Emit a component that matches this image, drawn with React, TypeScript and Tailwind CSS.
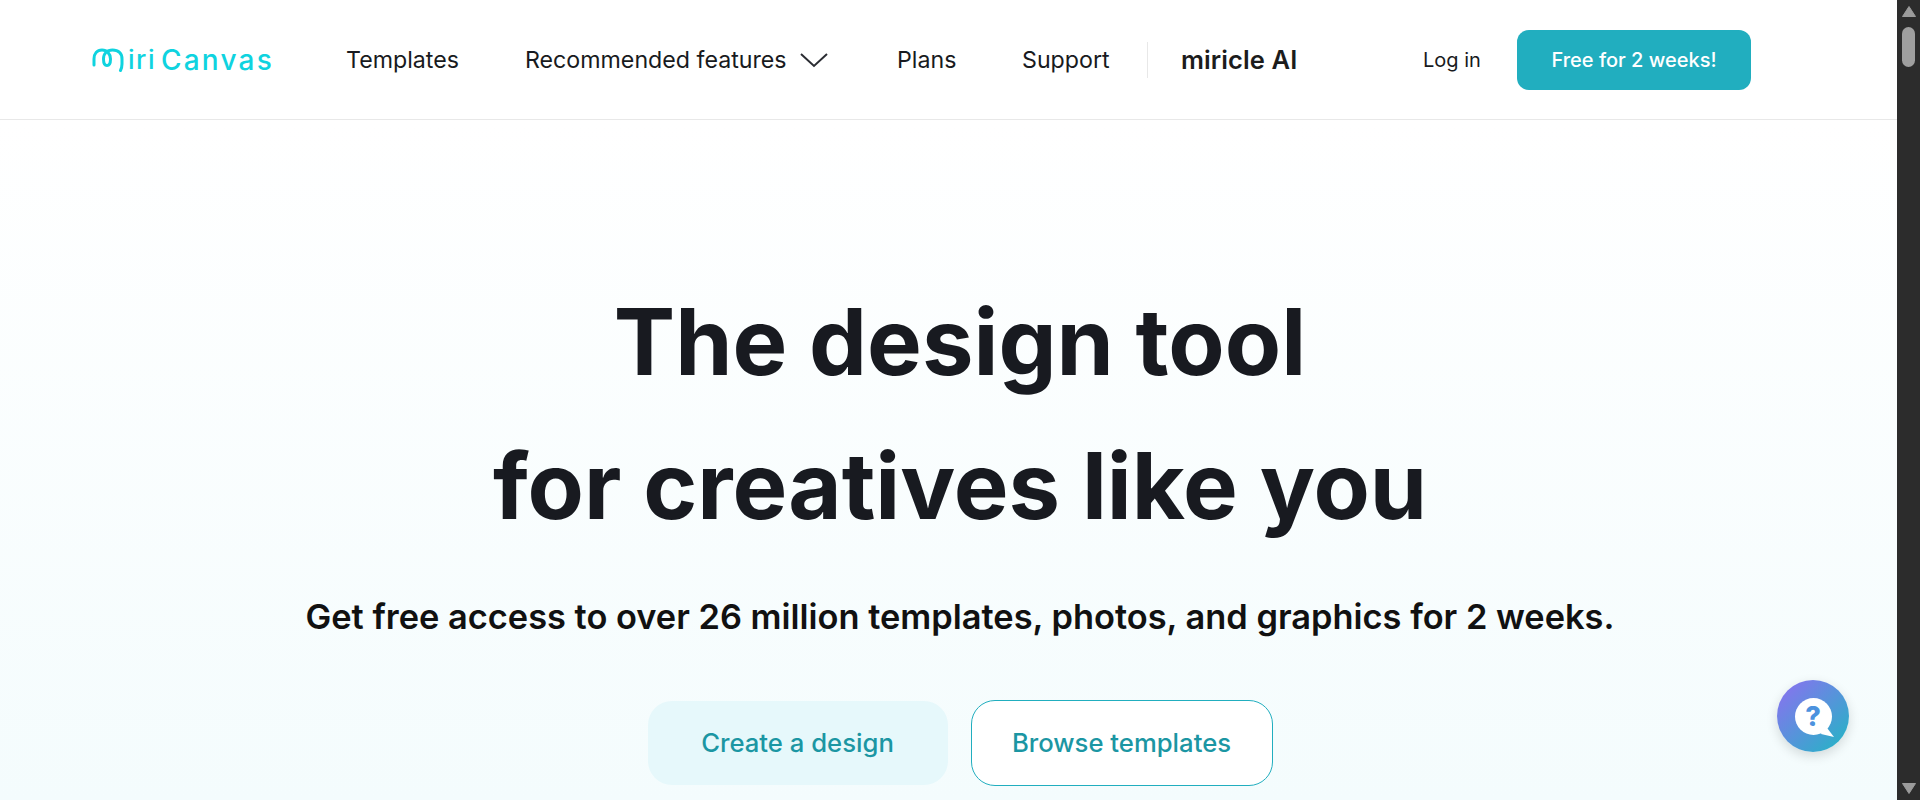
function MiriMark() {
  return (
    <svg width="33" height="24" viewBox="0 0 33 24" fill="none" className="shrink-0">
      <path
        d="M2 17V11C2 5.5 5 2 10 2C15 2 18.5 6 18.5 11C18.5 15 17 17.5 15 17.5C13 17.5 11.5 15 11.5 11C11.5 5.5 15 2 20.5 2C26.5 2 30 5.5 30 11V16C30 18.5 29.5 20.5 28.5 22.5"
        stroke="#0fd3df"
        strokeWidth="3"
        strokeLinecap="round"
      />
    </svg>
  );
}

function Scrollbar() {
  return (
    <div className="absolute inset-y-0 right-0 flex w-[23px] flex-col items-center justify-between bg-[#2c2c2c] py-[6px]">
      <div className="flex flex-col items-center gap-[10px]">
        <svg width="14" height="11" viewBox="0 0 14 11">
          <path d="M7 0.5L13.5 10.5H0.5Z" fill="#9b9b9b" stroke="#9b9b9b" strokeLinejoin="round" />
        </svg>
        <div className="h-[40px] w-[13px] rounded-full bg-[#9f9f9f]" />
      </div>
      <svg width="14" height="11" viewBox="0 0 14 11">
        <path d="M0.5 0.5H13.5L7 10.5Z" fill="#9b9b9b" stroke="#9b9b9b" strokeLinejoin="round" />
      </svg>
    </div>
  );
}

function ChatButton() {
  return (
    <div className="absolute left-[1777px] top-[680px] flex h-[72px] w-[72px] items-center justify-center rounded-full bg-[linear-gradient(135deg,#8f6ef2,#1fb8c3)] shadow-[0_4px_12px_rgba(0,0,0,0.14)]">
      <div className="relative flex h-[37px] w-[37px] items-center justify-center rounded-full bg-white">
        <span className="text-[27px] font-extrabold leading-none text-[#4c92de]">?</span>
        <svg width="13" height="13" viewBox="0 0 13 13" className="absolute bottom-[-2px] right-[-2px]">
          <path d="M3 0L13 13L0 10Z" fill="#fff" />
        </svg>
      </div>
    </div>
  );
}

export default function App() {
  return (
    <div className="relative h-[800px] w-[1920px] overflow-hidden bg-white font-['Inter',sans-serif] text-[#181a20]">
      <header className="flex h-[120px] items-center border-b border-[#e8e8e8] pl-[92px] text-[23.2px]">
        <div className="flex w-[254px] items-center text-[#0fd3df]">
          <MiriMark />
          <span className="ml-[3px] text-[26px] font-medium leading-none tracking-[1.5px]">iri</span>
          <span className="ml-[5px] text-[28px] font-medium leading-none tracking-[2.2px]">Canvas</span>
        </div>
        <nav className="flex items-center pt-[1px]">
          <a className="w-[179px]">Templates</a>
          <a className="flex w-[372px] items-center">
            Recommended features
            <svg width="30" height="18" viewBox="0 0 30 18" fill="none" className="ml-[12px]">
              <path d="M2 3L15 15L28 3" stroke="#2b2d33" strokeWidth="2" />
            </svg>
          </a>
          <a className="w-[125px]">Plans</a>
          <a className="w-[125px]">Support</a>
          <div className="h-[36px] w-px bg-[#e8e8e8]" />
          <span className="ml-[33px] w-[242px] text-[25.5px] font-semibold tracking-[0.1px] text-[#1c1c1c]">miricle AI</span>
        </nav>
        <a className="w-[94px] text-[20px]">Log in</a>
        <button className="h-[60px] w-[234px] rounded-[12px] bg-[#21aebf] text-[20px] font-medium text-white">
          Free for 2 weeks!
        </button>
      </header>

      <main className="flex h-[680px] flex-col items-center bg-[linear-gradient(180deg,#ffffff,#f4fcfd)] pt-[150px]">
        <h1 className="text-center text-[92px] font-bold leading-[144px]">
          The design tool
          <br />
          for creatives like you
        </h1>
        <p className="mt-[32px] text-[34.4px] font-semibold leading-[54px] text-[#111]">
          Get free access to over 26 million templates, photos, and graphics for 2 weeks.
        </p>
        <div className="mt-[56px] flex items-center gap-[23px] text-[25.7px] font-medium text-[#1b96a3]">
          <button className="h-[84px] w-[300px] rounded-[24px] bg-[#e6f8fb]">Create a design</button>
          <button className="h-[86px] w-[302px] rounded-[24px] border border-[#21aebf] bg-white">Browse templates</button>
        </div>
      </main>

      <ChatButton />
      <Scrollbar />
    </div>
  );
}
